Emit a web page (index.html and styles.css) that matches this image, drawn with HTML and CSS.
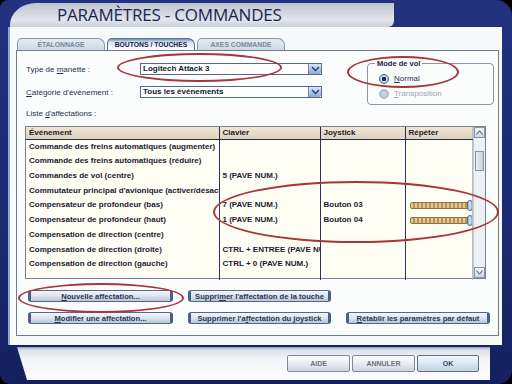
FILE: index.html
```html
<!DOCTYPE html>
<html lang="fr">
<head>
<meta charset="utf-8">
<title>Paramètres - Commandes</title>
<link rel="stylesheet" href="styles.css">
</head>
<body>
<div class="win">
  <div class="titlebar">
    <div class="title-gray"><h1>PARAMÈTRES - COMMANDES</h1></div>
    <div class="title-navy"></div>
  </div>
  <div class="main">
    <div class="tabs">
      <div class="tab">ÉTALONNAGE</div>
      <div class="tab active">BOUTONS / TOUCHES</div>
      <div class="tab">AXES COMMANDE</div>
    </div>
    <div class="box">
      <div class="top">
        <div class="fields">
          <div class="field">
            <span class="label">Type de <u>m</u>anette :</span>
            <div class="select">Logitech Attack 3<span class="dd"><svg width="9" height="6" viewBox="0 0 9 6"><path d="M1 1 L4.5 4.5 L8 1" fill="none" stroke="#1d3f7a" stroke-width="1.4"/></svg></span></div>
          </div>
          <div class="field">
            <span class="label"><u>C</u>atégorie d'événement :</span>
            <div class="select">Tous les événements<span class="dd"><svg width="9" height="6" viewBox="0 0 9 6"><path d="M1 1 L4.5 4.5 L8 1" fill="none" stroke="#1d3f7a" stroke-width="1.4"/></svg></span></div>
          </div>
        </div>
        <div class="mode">
          <span class="legend">Mode de vol</span>
          <div class="radio on"><span class="dot"></span><span><u>N</u>ormal</span></div>
          <div class="radio off"><span class="dot"></span><span><u>T</u>ransposition</span></div>
        </div>
      </div>
      <div class="list-label">Liste <u>d</u>'affectations :</div>
      <div class="grid">
        <table class="tbl">
          <colgroup><col class="c1"><col class="c2"><col class="c3"><col class="c4"></colgroup>
          <thead>
            <tr><th>Événement</th><th>Clavier</th><th>Joystick</th><th>Répéter</th></tr>
          </thead>
          <tbody>
            <tr><td>Commande des freins automatiques (augmenter)</td><td></td><td></td><td></td></tr>
            <tr><td>Commande des freins automatiques (réduire)</td><td></td><td></td><td></td></tr>
            <tr><td>Commandes de vol (centre)</td><td>5 (PAVE NUM.)</td><td></td><td></td></tr>
            <tr><td>Commutateur principal d'avionique (activer/désactiver)</td><td></td><td></td><td></td></tr>
            <tr><td>Compensateur de profondeur (bas)</td><td>7 (PAVE NUM.)</td><td>Bouton 03</td><td><div class="slider"><span class="knob"></span></div></td></tr>
            <tr><td>Compensateur de profondeur (haut)</td><td>1 (PAVE NUM.)</td><td>Bouton 04</td><td><div class="slider"><span class="knob"></span></div></td></tr>
            <tr><td>Compensation de direction (centre)</td><td></td><td></td><td></td></tr>
            <tr><td>Compensation de direction (droite)</td><td>CTRL + ENTREE (PAVE NUM.)</td><td></td><td></td></tr>
            <tr><td>Compensation de direction (gauche)</td><td>CTRL + 0 (PAVE NUM.)</td><td></td><td></td></tr>
            <tr class="filler"><td></td><td></td><td></td><td></td></tr>
          </tbody>
        </table>
        <div class="scroll">
          <span class="sb-btn"><svg width="7" height="5" viewBox="0 0 7 5"><path d="M0.5 4.5 L3.5 0.8 L6.5 4.5" fill="none" stroke="#3a4a6a" stroke-width="1"/></svg></span>
          <span class="sb-track"><span class="sb-thumb"></span></span>
          <span class="sb-btn"><svg width="7" height="5" viewBox="0 0 7 5"><path d="M0.5 0.5 L3.5 4.2 L6.5 0.5" fill="none" stroke="#3a4a6a" stroke-width="1"/></svg></span>
        </div>
      </div>
      <div class="btns">
        <div class="btn-row">
          <button class="btn w145"><u>N</u>ouvelle affectation...</button>
          <button class="btn w143">Suppri<u>m</u>er l'affectation de la touche</button>
        </div>
        <div class="btn-row">
          <button class="btn w145"><u>M</u>odifier une affectation...</button>
          <button class="btn w143">Supprimer l'a<u>f</u>fectation du joystick</button>
          <button class="btn w144"><u>R</u>établir les paramètres par défaut</button>
        </div>
      </div>
    </div>
  </div>
  <div class="bottom">
    <div class="bottom-panel">
      <button class="dbtn">AIDE</button>
      <button class="dbtn">ANNULER</button>
      <button class="dbtn ok">OK</button>
    </div>
  </div>
  <span class="mark m1"></span>
  <span class="mark m2"></span>
  <span class="mark m3"></span>
  <span class="mark m4"></span>
</div>
</body>
</html>
```
FILE: styles.css
```css
* { box-sizing: border-box; }
html, body { margin: 0; padding: 0; background: #000; }
body { width: 512px; height: 384px; overflow: hidden; font-family: "Liberation Sans", Arial, sans-serif; }

.win {
  position: relative;
  width: 512px;
  height: 384px;
  background: linear-gradient(180deg, #22327f 0%, #1b2a73 60%, #14205e 100%);
  border-radius: 8px 16px 14px 10px;
  display: grid;
  grid-template-rows: 27px 318px 39px;
}

/* title */
.titlebar { display: flex; padding-top: 3px; padding-left: 10px; }
.title-gray {
  width: 384px;
  border-radius: 26px 0 6px 0 / 22px 0 6px 0;
  background: linear-gradient(180deg, #bfc6d2 0%, #d3d8e0 45%, #e4e7ec 70%, #c9cfd9 100%);
  padding-left: 47px;
}
.title-gray h1 {
  margin: 0;
  font-family: "Open Sans", "Noto Sans", sans-serif;
  font-weight: 400;
  font-size: 17px;
  line-height: 24px;
  color: #1b2550;
  letter-spacing: -0.2px;
}
.title-navy { flex: 1; }

/* main panel */
.main {
  margin: 0 10px 0 8px;
  background: #f7fafb;
  border-left: 2px solid #8fa6d6;
  padding: 11px 3px 0 6px;
  display: flex;
  flex-direction: column;
}
.tabs { display: flex; height: 12px; gap: 2px; padding-left: 1px; }
.tab {
  width: 88px;
  border: 1px solid #8a98aa;
  border-bottom: 0;
  border-radius: 5px 7px 0 0;
  background: linear-gradient(180deg, #e6ecf2, #cfd8e2);
  font-size: 6.8px;
  font-weight: bold;
  color: #7b8898;
  text-align: center;
  line-height: 11px;
}
.tab.active {
  background: linear-gradient(180deg, #6f8fc4 0px, #d4e0ee 3px, #f7fafb 9px);
  border-color: #5a6e90;
  color: #1a2548;
}

.box {
  height: 286px;
  border: 1px solid #6e7e8c;
  background: #fbfdfd;
  padding: 12px 0 0 9px;
  display: flex;
  flex-direction: column;
}
.top { display: flex; height: 45px; }
.fields { display: flex; flex-direction: column; gap: 11px; width: 332px; }
.field { display: flex; align-items: center; height: 12px; }
.label { width: 114px; font-size: 8px; color: #27304a; }
.select {
  width: 182px;
  height: 12px;
  border: 1px solid #54688e;
  background: #fff;
  font-size: 8px;
  font-weight: bold;
  color: #101828;
  line-height: 10px;
  padding-left: 2px;
  display: flex;
  justify-content: space-between;
}
.dd {
  width: 13px;
  height: 10px;
  background: linear-gradient(180deg, #d9e6f6, #8ea9d6);
  border-left: 1px solid #6a84b4;
  border-radius: 0 2px 2px 0;
  display: flex;
  align-items: center;
  justify-content: center;
}

.mode {
  position: relative;
  margin-left: 9px;
  width: 127px;
  height: 42px;
  border: 1px solid #8a96a6;
  border-radius: 4px;
  padding: 9px 0 0 11px;
  display: flex;
  flex-direction: column;
  gap: 4px;
}
.legend {
  position: absolute;
  top: -5px;
  left: 7px;
  background: #fbfdfd;
  padding: 0 2px;
  font-size: 7.5px;
  font-weight: bold;
  color: #1a2238;
  line-height: 9px;
}
.radio { display: flex; align-items: center; gap: 5px; font-size: 8px; color: #27304a; height: 11px; }
.radio.off { color: #9aa4b0; }
.dot {
  width: 10px; height: 10px; border-radius: 50%;
  border: 1px solid #51637f;
  background: radial-gradient(circle, #1d2d58 0 2px, #cfdcec 2.5px, #9fb2cc 100%);
}
.radio.off .dot { border-color: #a6b2c0; background: radial-gradient(circle, #d4dce6, #a8b6c6); }

.list-label { font-size: 8px; color: #27304a; height: 17px; line-height: 10px; margin-top: 1px; }

/* table */
.grid {
  display: flex;
  width: 461px;
  height: 153px;
  margin-left: -1px;
  border: 1px solid #7a8290;
  background: #fffef4;
}
.tbl {
  border-collapse: collapse;
  table-layout: fixed;
  width: 446px;
  font-size: 8px;
  font-weight: bold;
  color: #1a2030;
}
.c1 { width: 193px; } .c2 { width: 101px; } .c3 { width: 85px; } .c4 { width: 67px; }
.tbl th {
  height: 12px;
  background: linear-gradient(180deg, #eee6d3, #dfd3b8);
  border-bottom: 1px solid #232a50;
  border-right: 1px solid #232a50;
  text-align: left;
  padding: 0 0 0 3px;
  font-weight: bold;
  white-space: nowrap;
  line-height: 11px;
}
.tbl td {
  height: 14.75px;
  padding: 0 0 0 3px;
  border-right: 1px solid #2c3360;
  white-space: nowrap;
  overflow: hidden;
  line-height: 14px;
}
.tbl th:last-child, .tbl td:last-child { border-right: 1px solid #b7bcc4; }
.tbl tr.filler td { height: 8px; }

.slider {
  position: relative;
  width: 62px;
  height: 7px;
  margin-left: 1px;
  border: 1px solid #8d7445;
  border-radius: 2px;
  background: repeating-linear-gradient(90deg, #e4c88e 0 2px, #b89452 2px 4px);
  display: flex;
  justify-content: flex-end;
  align-items: center;
}
.knob {
  width: 6px;
  height: 11px;
  margin-right: -2px;
  border-radius: 3px;
  border: 1px solid #4d6e92;
  background: linear-gradient(90deg, #8fb1d4, #dbe8f4, #8aa8cc);
}

.scroll {
  width: 13px;
  display: flex;
  flex-direction: column;
  background: #eef1f4;
  border-left: 1px solid #c4cad2;
}
.sb-btn {
  height: 11px;
  border: 1px solid #8894a6;
  background: linear-gradient(180deg, #f4f6f9, #cdd5e0);
  display: flex;
  align-items: center;
  justify-content: center;
}
.sb-track { flex: 1; position: relative; padding-top: 13px; }
.sb-thumb {
  display: block;
  margin: 0 1px;
  height: 20px;
  border: 1px solid #8894a6;
  background: linear-gradient(90deg, #e8edf3, #c6d0dc);
}

/* buttons */
.btns { display: flex; flex-direction: column; gap: 10px; margin-top: 11px; margin-left: 2px; }
.btn-row { display: flex; gap: 15px; }
.btn {
  height: 12px;
  padding: 0;
  border: 1px solid #56668a;
  border-left: 3px solid #4b5f8a;
  border-right: 3px solid #4b5f8a;
  border-radius: 3px;
  background: linear-gradient(180deg, #f3f6fa 0%, #dde4ee 50%, #b8c5d8 100%);
  font-family: "Liberation Sans", Arial, sans-serif;
  font-size: 7.6px;
  font-weight: bold;
  color: #2a3556;
  line-height: 9px;
}
.w145 { width: 145px; }
.w143 { width: 143px; }
.w144 { width: 144px; }

/* bottom */
.bottom { padding: 2px 22px 4px 17px; }
.bottom-panel {
  height: 33px;
  clip-path: polygon(0 0, 100% 0, 100% 100%, 10px 100%);
  background: linear-gradient(180deg, #9aa4b6 0, #dde2ea 3px, #f4f6f9 40%, #fbfcfd 100%);
  display: flex;
  justify-content: flex-end;
  align-items: center;
  gap: 2px;
  padding-right: 11px;
  padding-top: 0;
}
.dbtn {
  width: 63px;
  height: 17px;
  border: 1px solid #7e8898;
  border-radius: 2px;
  background: linear-gradient(180deg, #ffffff, #e4e8ee 60%, #cfd6e0);
  font-family: "Liberation Sans", Arial, sans-serif;
  font-size: 7px;
  font-weight: bold;
  color: #6a7280;
  padding: 0;
}
.dbtn.ok { width: 62px; border-color: #5d6f94; background: linear-gradient(180deg, #f4f7fc, #d8e2f0 60%, #c3d0e4); color: #3a4660; }

/* red annotation marks */
.mark {
  position: absolute;
  border: 2px solid #a7363c;
  border-radius: 50%;
}
.m1 { left: 117px; top: 53px; width: 165px; height: 29px; }
.m2 { left: 347px; top: 56px; width: 112px; height: 32px; }
.m3 { left: 213px; top: 181px; width: 286px; height: 62px; }
.m4 { left: 18px; top: 283px; width: 166px; height: 30px; }
```
